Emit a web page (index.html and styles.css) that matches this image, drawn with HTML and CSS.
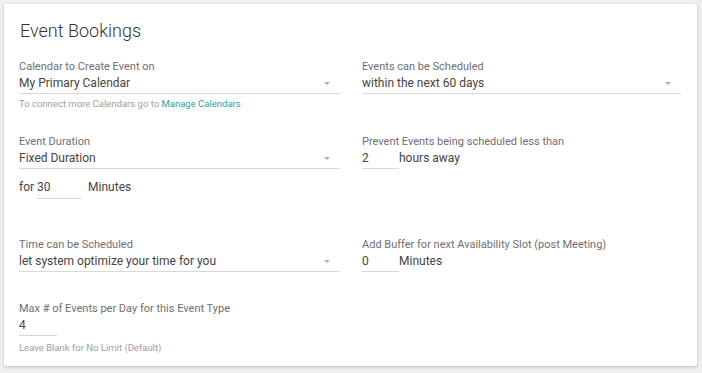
FILE: index.html
```html
<!DOCTYPE html>
<html>
<head>
<meta charset="utf-8">
<link rel="stylesheet" href="styles.css">
</head>
<body>
<div class="card">
  <h1 class="title">Event Bookings</h1>
  <div class="grid">
    <div class="field">
      <div class="label">Calendar to Create Event on</div>
      <div class="select"><span>My Primary Calendar</span><span class="caret"></span></div>
      <div class="helper">To connect more Calendars go to <a class="link">Manage Calendars</a></div>
    </div>
    <div class="field">
      <div class="label">Events can be Scheduled</div>
      <div class="select"><span>within the next 60 days</span><span class="caret"></span></div>
    </div>

    <div class="field row2">
      <div class="label">Event Duration</div>
      <div class="select"><span>Fixed Duration</span><span class="caret"></span></div>
      <div class="inline for-row">
        <span class="text">for</span>
        <span class="input w45">30</span>
        <span class="text after">Minutes</span>
      </div>
    </div>
    <div class="field row2">
      <div class="label">Prevent Events being scheduled less than</div>
      <div class="inline">
        <span class="input w37">2</span>
        <span class="text">hours away</span>
      </div>
    </div>

    <div class="field row3">
      <div class="label">Time can be Scheduled</div>
      <div class="select"><span>let system optimize your time for you</span><span class="caret"></span></div>
    </div>
    <div class="field row3">
      <div class="label">Add Buffer for next Availability Slot (post Meeting)</div>
      <div class="inline">
        <span class="input w37">0</span>
        <span class="text">Minutes</span>
      </div>
    </div>

    <div class="field row4">
      <div class="label">Max # of Events per Day for this Event Type</div>
      <div class="inline">
        <span class="input w38">4</span>
      </div>
      <div class="helper helper-last">Leave Blank for No Limit (Default)</div>
    </div>
  </div>
</div>
</body>
</html>
```
FILE: styles.css
```css
html, body {
  margin: 0;
  padding: 0;
}
body {
  background: #efefef;
  font-family: Roboto, "Liberation Sans", sans-serif;
  width: 702px;
  height: 373px;
  overflow: hidden;
}
.card {
  margin: 4px 5px 0 4px;
  background: #fff;
  height: 362px;
  box-sizing: border-box;
  padding: 16px 16px 0 15px;
  box-shadow: 0 1px 3px rgba(0,0,0,0.22);
  border-radius: 2px;
}
.title {
  margin: 0;
  font-size: 18px;
  font-weight: 300;
  line-height: 22px;
  color: #333;
  padding-left: 1px;
}
.grid {
  display: grid;
  grid-template-columns: 321px 319px;
  column-gap: 22px;
  margin-top: 18px;
}
.label {
  font-size: 11px;
  line-height: 13px;
  color: #6f6f6f;
}
.select {
  display: flex;
  justify-content: space-between;
  align-items: center;
  font-size: 12px;
  color: #444;
  height: 20px;
  border-bottom: 1px solid #d9d9d9;
}
.caret {
  width: 0;
  height: 0;
  border-left: 3px solid transparent;
  border-right: 3px solid transparent;
  border-top: 3px solid #b0b0b0;
  margin-right: 10px;
  margin-top: 1px;
}
.helper {
  font-size: 9.5px;
  color: #a0a0a0;
  margin-top: 4px;
  line-height: 12px;
}
.helper-last {
  margin-top: 6px;
}
.link {
  color: #26a69a;
  text-decoration: none;
}
.row2 { margin-top: 25px; }
.row3 { margin-top: 39px; }
.row4 { margin-top: 30px; }
.inline {
  display: flex;
  align-items: flex-start;
  font-size: 12px;
  color: #444;
}
.for-row {
  margin-top: 7px;
}
.for-row .input,
.for-row .text {
  height: 22px;
  line-height: 22px;
}
.input {
  display: block;
  height: 20px;
  line-height: 20px;
  border-bottom: 1px solid #d9d9d9;
}
.text {
  line-height: 20px;
}
.w45 { width: 45px; margin-left: 3px; }
.w37 { width: 37px; }
.w38 { width: 38px; }
.after { margin-left: 6px; }
```
